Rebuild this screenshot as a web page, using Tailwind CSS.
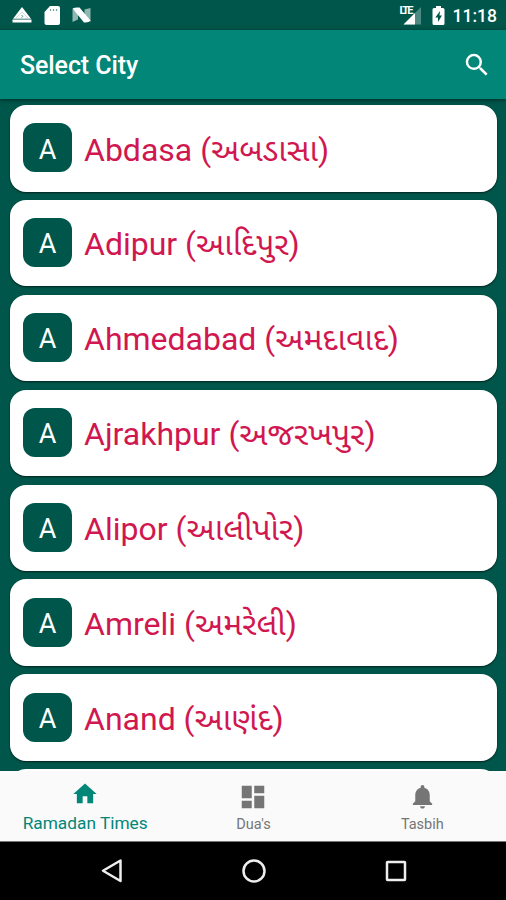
<!DOCTYPE html>
<html lang="en">
<head>
  <meta charset="UTF-8" />
  <meta name="viewport" content="width=device-width, initial-scale=1.0" />
  <title>Select City</title>
  <script src="https://cdn.jsdelivr.net/npm/@tailwindcss/browser@4"></script>
</head>
<body class="bg-black font-[Roboto,'Noto_Sans_Gujarati','Noto_Sans',sans-serif]">
  <div class="w-[506px] h-[900px] flex flex-col overflow-hidden bg-[#00564a]">

    <!-- Status bar -->
    <div class="h-[30px] shrink-0 flex items-center bg-[#00564a] text-white">
      <svg class="ml-[12px] w-[20px] h-[16px]" viewBox="0 0 20 16">
        <path d="M10 0 L19 11.800 H1 Z" fill="#fff" />
        <path d="M0.500 12.500 H19.500 V15.500 H0.500 Z" fill="#fff" />
        <path d="M4 11 L10 5 L16 11" fill="none" stroke="#00564a" stroke-opacity="0.25" stroke-width="0.8" />
        <path d="M9.500 8 L10.800 9.300 L9.500 10.800" fill="none" stroke="#00564a" stroke-opacity="0.7" stroke-width="0.9" />
      </svg>
      <svg class="ml-[12px] mt-[1px] w-[17px] h-[19px]" viewBox="0 0 17 19">
        <path d="M6 0 H14 Q16 0 16 2 V17 Q16 19 14 19 H2.500 Q0.500 19 0.500 17 V6 Z" fill="#fff" />
        <path d="M6.500 3 V5 M9.500 3 V5 M12.500 3 V5" stroke="#00564a" stroke-opacity="0.55" stroke-width="1.200" />
      </svg>
      <svg class="ml-[11px] w-[20px] h-[16px]" viewBox="0 0 20 16">
        <path d="M0.500 2 L6 6 V12.500 L0.500 15 Z M18.500 1 V15 L12.500 9 V2.500 Z" fill="#8fb8b1" />
        <path d="M0.500 1.500 Q3 0 7.500 0.500 L18.500 13.500 Q17 16 12 15.500 Z" fill="#fff" />
      </svg>
      <div class="relative ml-auto w-[23px] h-[19px]">
        <svg class="w-[23px] h-[19px]" viewBox="0 0 23 19">
          <path d="M22 1 V18.500 H4.500 Z" fill="#fff" fill-opacity="0.3" />
          <path d="M16 7 V18.500 H4.500 Z" fill="#fff" />
        </svg>
        <span class="absolute left-px top-0 h-[9px] w-[12px] bg-[#00564a] text-[11px] leading-[9px] font-bold tracking-[-2px]">LTE</span>
      </div>
      <svg class="ml-[10px] w-[13px] h-[19px]" viewBox="0 0 13 19">
        <path d="M4 0 H9 V2 H11 Q12.500 2 12.500 3.500 V17.500 Q12.500 19 11 19 H2 Q0.500 19 0.500 17.500 V3.500 Q0.500 2 2 2 H4 Z" fill="#fff" />
        <path d="M8 5 L3.300 11.500 H6 V16 L10 9.500 H7.500 Z" fill="#00564a" />
      </svg>
      <span class="ml-[8px] mr-[9px] pt-[2px] text-[17.500px] leading-[20px] font-medium">11:18</span>
    </div>

    <!-- Toolbar -->
    <div class="h-[69px] shrink-0 flex items-center justify-between pl-[20px] pr-[14px] bg-[#028678] text-white shadow-[0_1px_4px_rgba(0,0,0,0.5)] z-10">
      <h1 class="text-[25px] leading-[30px] font-medium tracking-[-0.1px] pt-[3px]">Select City</h1>
      <svg class="w-[30px] h-[30px]" viewBox="0 0 24 24" fill="#fff">
        <path d="M15.500 14h-.79l-.28-.27A6.471 6.471 0 0 0 16 9.500 6.500 6.500 0 1 0 9.500 16c1.610 0 3.090-.59 4.230-1.570l.27.28v.79l5 4.990L20.490 19l-4.990-5zm-6 0C7.010 14 5 11.990 5 9.500S7.010 5 9.500 5 14 7.010 14 9.500 11.990 14 9.500 14z" />
      </svg>
    </div>

    <!-- City list -->
    <div class="flex-1 min-h-0 overflow-hidden flex flex-col gap-[8.4px] pt-[6px] pl-[10px] pr-[9px]">
      <div class="h-[86.500px] shrink-0 flex items-center pl-[13px] bg-white rounded-[16px] shadow-[0_1px_2px_rgba(0,0,0,0.6)]">
        <div class="size-[49px] mb-[1px] flex items-center justify-center bg-[#00564a] rounded-[12px] text-white text-[27px] pt-[4px]">A</div>
        <p class="ml-[12px] pt-[2.500px] text-[32px] leading-[40px] text-[#d0174f] whitespace-nowrap">Abdasa (અબડાસા)</p>
      </div>
      <div class="h-[86.500px] shrink-0 flex items-center pl-[13px] bg-white rounded-[16px] shadow-[0_1px_2px_rgba(0,0,0,0.6)]">
        <div class="size-[49px] mb-[1px] flex items-center justify-center bg-[#00564a] rounded-[12px] text-white text-[27px] pt-[4px]">A</div>
        <p class="ml-[12px] pt-[2.500px] text-[32px] leading-[40px] text-[#d0174f] whitespace-nowrap">Adipur (આદિપુર)</p>
      </div>
      <div class="h-[86.500px] shrink-0 flex items-center pl-[13px] bg-white rounded-[16px] shadow-[0_1px_2px_rgba(0,0,0,0.6)]">
        <div class="size-[49px] mb-[1px] flex items-center justify-center bg-[#00564a] rounded-[12px] text-white text-[27px] pt-[4px]">A</div>
        <p class="ml-[12px] pt-[2.500px] text-[32px] leading-[40px] text-[#d0174f] whitespace-nowrap">Ahmedabad (અમદાવાદ)</p>
      </div>
      <div class="h-[86.500px] shrink-0 flex items-center pl-[13px] bg-white rounded-[16px] shadow-[0_1px_2px_rgba(0,0,0,0.6)]">
        <div class="size-[49px] mb-[1px] flex items-center justify-center bg-[#00564a] rounded-[12px] text-white text-[27px] pt-[4px]">A</div>
        <p class="ml-[12px] pt-[2.500px] text-[32px] leading-[40px] text-[#d0174f] whitespace-nowrap">Ajrakhpur (અજરખપુર)</p>
      </div>
      <div class="h-[86.500px] shrink-0 flex items-center pl-[13px] bg-white rounded-[16px] shadow-[0_1px_2px_rgba(0,0,0,0.6)]">
        <div class="size-[49px] mb-[1px] flex items-center justify-center bg-[#00564a] rounded-[12px] text-white text-[27px] pt-[4px]">A</div>
        <p class="ml-[12px] pt-[2.500px] text-[32px] leading-[40px] text-[#d0174f] whitespace-nowrap">Alipor (આલીપોર)</p>
      </div>
      <div class="h-[86.500px] shrink-0 flex items-center pl-[13px] bg-white rounded-[16px] shadow-[0_1px_2px_rgba(0,0,0,0.6)]">
        <div class="size-[49px] mb-[1px] flex items-center justify-center bg-[#00564a] rounded-[12px] text-white text-[27px] pt-[4px]">A</div>
        <p class="ml-[12px] pt-[2.500px] text-[32px] leading-[40px] text-[#d0174f] whitespace-nowrap">Amreli (અમરેલી)</p>
      </div>
      <div class="h-[86.500px] shrink-0 flex items-center pl-[13px] bg-white rounded-[16px] shadow-[0_1px_2px_rgba(0,0,0,0.6)]">
        <div class="size-[49px] mb-[1px] flex items-center justify-center bg-[#00564a] rounded-[12px] text-white text-[27px] pt-[4px]">A</div>
        <p class="ml-[12px] pt-[2.500px] text-[32px] leading-[40px] text-[#d0174f] whitespace-nowrap">Anand (આણંદ)</p>
      </div>
      <div class="h-[86.500px] shrink-0 bg-white rounded-[16px]"></div>
    </div>

    <!-- Bottom navigation -->
    <div class="h-[70px] shrink-0 grid grid-cols-3 pl-[1px] bg-[#fafafa] text-[#757575]">
      <div class="flex flex-col items-center text-[#028678]">
        <svg class="mt-[9px] w-[28px] h-[28px]" viewBox="0 0 24 24" fill="currentColor">
          <path d="M10 20v-6h4v6h5v-8h3L12 3 2 12h3v8z" />
        </svg>
        <span class="mt-[5px] text-[17.300px] leading-[20px]">Ramadan Times</span>
      </div>
      <div class="flex flex-col items-center">
        <svg class="mt-[11px] w-[30px] h-[30px]" viewBox="0 0 24 24" fill="currentColor">
          <path d="M3 13h8V3H3v10zm0 8h8v-6H3v6zm10 0h8V11h-8v10zm0-18v6h8V3h-8z" />
        </svg>
        <span class="mt-[4px] text-[14.500px] leading-[18px]">Dua's</span>
      </div>
      <div class="flex flex-col items-center pl-[1px]">
        <svg class="mt-[11px] w-[29px] h-[29px]" viewBox="0 0 24 24" fill="currentColor">
          <path d="M12 22c1.100 0 2-.9 2-2h-4c0 1.100.89 2 2 2zm6-6v-5c0-3.070-1.640-5.640-4.500-6.320V4c0-.83-.67-1.500-1.500-1.500s-1.500.67-1.500 1.500v.68C7.630 5.360 6 7.920 6 11v5l-2 2v1h16v-1l-2-2z" />
        </svg>
        <span class="mt-[5px] text-[14.500px] leading-[18px]">Tasbih</span>
      </div>
    </div>

    <!-- System navigation -->
    <div class="h-[59px] shrink-0 flex items-center pl-[100px] bg-black border-t border-[#777]">
      <svg class="w-[24px] h-[26px]" viewBox="0 0 24 26">
        <path d="M20.500 2.500 V23 L3 12.750 Z" fill="none" stroke="#eee" stroke-width="2.500" stroke-linejoin="round" />
      </svg>
      <svg class="ml-[117px] w-[26px] h-[26px]" viewBox="0 0 26 26">
        <circle cx="13" cy="13" r="10.500" fill="none" stroke="#eee" stroke-width="2.500" />
      </svg>
      <svg class="ml-[118px] w-[22px] h-[22px]" viewBox="0 0 22 22">
        <rect x="2" y="2" width="18" height="18" rx="0.500" fill="none" stroke="#eee" stroke-width="2.500" />
      </svg>
    </div>
  </div>
</body>
</html>
